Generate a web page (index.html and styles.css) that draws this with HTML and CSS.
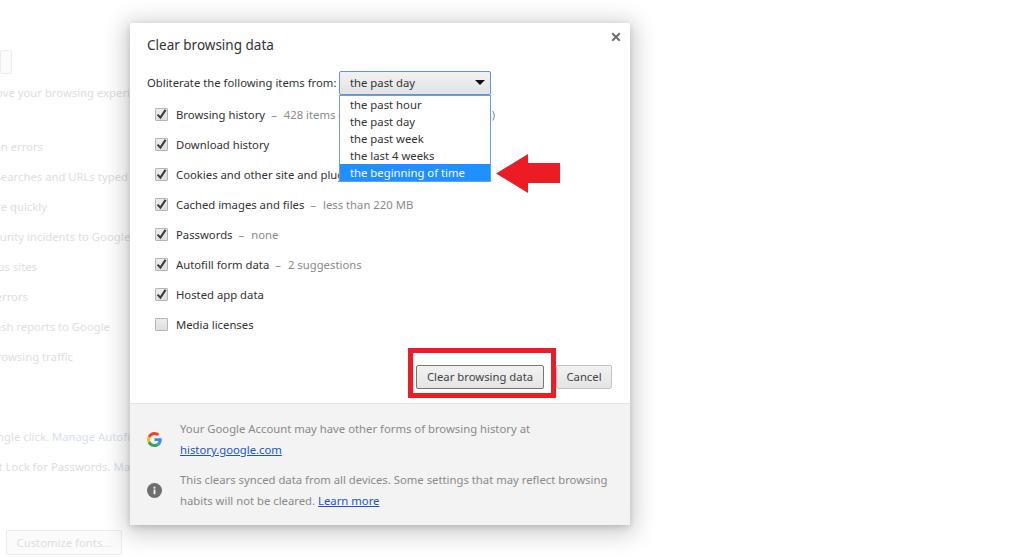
FILE: index.html
```html
<!DOCTYPE html>
<html lang="en">
<head>
<meta charset="utf-8">
<title>Clear browsing data</title>
<link rel="stylesheet" href="styles.css">
</head>
<body>
<main class="page">
  <div class="bg-btn-row"><span class="bg-btn"></span></div>
  <div class="bg-row bg-first end-130"><span class="bg-text">Google may use your browsing history to improve your browsing experi</span></div>
  <div class="bg-group">
    <div class="bg-row end-43"><span class="bg-text">Use a web service to help resolve navigation errors</span></div>
    <div class="bg-row end-128"><span class="bg-text">Use a prediction service to help complete searches and URLs typed</span></div>
    <div class="bg-row end-47"><span class="bg-text">Use a prediction service to load pages more quickly</span></div>
    <div class="bg-row end-130"><span class="bg-text">Automatically report details of possible security incidents to Google</span></div>
    <div class="bg-row end-37"><span class="bg-text">Protect you and your device from dangerous sites</span></div>
    <div class="bg-row end-28"><span class="bg-text">Use a web service to help resolve spelling errors</span></div>
    <div class="bg-row end-110"><span class="bg-text">Automatically send usage statistics and crash reports to Google</span></div>
    <div class="bg-row end-73"><span class="bg-text">Send a "Do Not Track" request with your browsing traffic</span></div>
  </div>
  <div class="bg-group bg-group-2">
    <div class="bg-row end-130"><span class="bg-text">Enable Autofill to fill out web forms in a single click. <span class="bg-link">Manage Autofi</span></span></div>
    <div class="bg-row end-130"><span class="bg-text">Offer to save your web passwords. Use Smart Lock for Passwords. <span class="bg-link">Ma</span></span></div>
  </div>
  <div class="bg-fonts"><span class="bg-btn bg-btn-fonts">Customize fonts...</span></div>
</main>

<section class="dialog" aria-label="Clear browsing data">
  <button class="close" aria-label="Close">
    <svg viewBox="0 0 10 10" width="10" height="10"><path d="M1.2 1.2 8.8 8.8M8.8 1.2 1.2 8.8" fill="none" stroke="#6f6f6f" stroke-width="2"/></svg>
  </button>
  <h1 class="title">Clear browsing data</h1>
  <div class="body">
    <div class="from">
      <span class="from-label">Obliterate the following items from:</span>
      <div class="select">the past day<span class="caret"></span></div>
    </div>
    <ul class="checks">
      <li class="check"><span class="box on"><svg viewBox="0 0 13 13" width="13" height="13"><path d="M2.6 6.6 5.4 9.6 10.6 1.8" fill="none" stroke="#3c3c3c" stroke-width="2.1"/></svg></span>Browsing history<span class="note"><span class="dash">–</span>428 items (and more on synced devices)</span></li>
      <li class="check"><span class="box on"><svg viewBox="0 0 13 13" width="13" height="13"><path d="M2.6 6.6 5.4 9.6 10.6 1.8" fill="none" stroke="#3c3c3c" stroke-width="2.1"/></svg></span>Download history</li>
      <li class="check"><span class="box on"><svg viewBox="0 0 13 13" width="13" height="13"><path d="M2.6 6.6 5.4 9.6 10.6 1.8" fill="none" stroke="#3c3c3c" stroke-width="2.1"/></svg></span>Cookies and other site and plugin data</li>
      <li class="check"><span class="box on"><svg viewBox="0 0 13 13" width="13" height="13"><path d="M2.6 6.6 5.4 9.6 10.6 1.8" fill="none" stroke="#3c3c3c" stroke-width="2.1"/></svg></span>Cached images and files<span class="note"><span class="dash">–</span>less than 220 MB</span></li>
      <li class="check"><span class="box on"><svg viewBox="0 0 13 13" width="13" height="13"><path d="M2.6 6.6 5.4 9.6 10.6 1.8" fill="none" stroke="#3c3c3c" stroke-width="2.1"/></svg></span>Passwords<span class="note"><span class="dash">–</span>none</span></li>
      <li class="check"><span class="box on"><svg viewBox="0 0 13 13" width="13" height="13"><path d="M2.6 6.6 5.4 9.6 10.6 1.8" fill="none" stroke="#3c3c3c" stroke-width="2.1"/></svg></span>Autofill form data<span class="note"><span class="dash">–</span>2 suggestions</span></li>
      <li class="check"><span class="box on"><svg viewBox="0 0 13 13" width="13" height="13"><path d="M2.6 6.6 5.4 9.6 10.6 1.8" fill="none" stroke="#3c3c3c" stroke-width="2.1"/></svg></span>Hosted app data</li>
      <li class="check"><span class="box"></span>Media licenses</li>
    </ul>
    <div class="actions">
      <button class="btn btn-primary">Clear browsing data</button>
      <button class="btn btn-cancel">Cancel</button>
    </div>
  </div>
  <footer class="foot">
    <div class="foot-row">
      <svg class="foot-icon" viewBox="0 0 48 48" width="15" height="15">
        <path fill="#EA4335" d="M24 9.5c3.500 0 6.700 1.300 9.100 3.500l6.800-6.800C35.800 2.400 30.300 0 24 0 14.600 0 6.500 5.400 2.600 13.200l7.900 6.100C12.400 13.700 17.700 9.500 24 9.500z"/>
        <path fill="#4285F4" d="M47 24.500c0-1.600-.1-3.100-.4-4.500H24v9h12.900c-.6 3-2.200 5.500-4.700 7.200l7.600 5.900C44.300 37.900 47 31.800 47 24.500z"/>
        <path fill="#FBBC05" d="M10.500 28.700C10 27.200 9.700 25.600 9.700 24s.3-3.200.8-4.700l-7.900-6.100C.9 16.400 0 20.100 0 24s.9 7.600 2.600 10.800l7.900-6.100z"/>
        <path fill="#34A853" d="M24 48c6.500 0 11.900-2.100 15.800-5.900l-7.600-5.900c-2.100 1.400-4.900 2.300-8.200 2.300-6.300 0-11.600-4.200-13.500-9.800l-7.900 6.100C6.500 42.600 14.600 48 24 48z"/>
      </svg>
      <p class="foot-text">Your Google Account may have other forms of browsing history at<br><a class="link" href="#">history.google.com</a></p>
    </div>
    <div class="foot-row">
      <svg class="foot-icon" viewBox="0 0 16 16" width="15" height="15">
        <circle cx="8" cy="8" r="8" fill="#6e6e6e"/>
        <rect x="7" y="7" width="2" height="5" fill="#f3f3f3"/>
        <rect x="7" y="4" width="2" height="2" fill="#f3f3f3"/>
      </svg>
      <p class="foot-text">This clears synced data from all devices. Some settings that may reflect browsing<br>habits will not be cleared. <a class="link" href="#">Learn more</a></p>
    </div>
  </footer>
</section>

<ul class="dropdown">
  <li class="opt">the past hour</li>
  <li class="opt">the past day</li>
  <li class="opt">the past week</li>
  <li class="opt">the last 4 weeks</li>
  <li class="opt opt-sel">the beginning of time</li>
</ul>

<svg class="arrow" viewBox="0 0 64 39" width="64" height="39"><path d="M0 19.500 32 0V9H64V29H32V39Z" fill="#ed1c24"/></svg>
<div class="mark"></div>
</body>
</html>
```
FILE: styles.css
```css
* { box-sizing: border-box; }
html, body { margin: 0; height: 100%; }
body {
  width: 1028px;
  height: 557px;
  overflow: hidden;
  background: #fff;
  font-family: "Noto Sans", "Open Sans", sans-serif;
  font-size: 11.3px;
  color: #333;
  position: relative;
}
ul { list-style: none; margin: 0; padding: 0; }
p, h1 { margin: 0; }

/* dimmed settings page behind the dialog */
.page { width: 130px; color: #dedede; padding-top: 50px; }
.bg-btn-row { display: flex; justify-content: flex-end; width: 12px; height: 24px; }
.bg-btn {
  display: block;
  width: 100%;
  border: 1px solid #ececec;
  border-radius: 2px;
  background: #fbfbfb;
}
.bg-row { display: flex; justify-content: flex-end; height: 30px; line-height: 30px; white-space: nowrap; }
.bg-first { margin-top: 4px; }
.bg-text { flex: none; }
.bg-group { margin-top: 24px; }
.bg-group-2 { margin-top: 50px; }
.bg-link { color: #d7e0f3; }
.end-130 { width: 130px; }
.end-43 { width: 43px; }
.end-128 { width: 128px; }
.end-47 { width: 47px; }
.end-37 { width: 37px; }
.end-28 { width: 28px; }
.end-110 { width: 110px; }
.end-73 { width: 73px; }
.bg-fonts { margin-top: 48px; padding-left: 6px; }
.bg-btn-fonts {
  width: 116px;
  height: 25px;
  line-height: 23px;
  text-align: center;
  color: #dedede;
}

/* dialog */
.dialog {
  position: absolute;
  left: 130px;
  top: 23px;
  width: 500px;
  height: 502px;
  background: #fff;
  border-radius: 2px;
  box-shadow: 0 4px 23px 5px rgba(0,0,0,.2), 0 2px 6px rgba(0,0,0,.15);
  display: flex;
  flex-direction: column;
}
.close {
  position: absolute;
  right: 9px;
  top: 9px;
  width: 10px;
  height: 10px;
  padding: 0;
  border: 0;
  background: none;
  display: flex;
}
.title { font-size: 13.5px; font-weight: 400; color: #333; padding: 12px 17px 0; line-height: 20px; }
.body { flex: 1; padding: 0 18px 0 17px; display: flex; flex-direction: column; }
.from { display: flex; align-items: center; margin-top: 16px; height: 24px; }
.from-label { color: #333; width: 192px; flex: none; padding-bottom: 2px; }
.select {
  width: 152px;
  height: 24px;
  border: 1px solid #5f93e8;
  border-radius: 2px;
  background: linear-gradient(#f2f2f2, #e2e2e2);
  padding-left: 10px;
  line-height: 22px;
  position: relative;
  color: #333;
}
.caret {
  position: absolute;
  right: 5px;
  top: 8px;
  border: 5px solid transparent;
  border-top: 5px solid #111;
  border-bottom: 0;
}
.checks { margin-top: 4px; padding-left: 8px; }
.check { display: flex; align-items: center; height: 30px; white-space: nowrap; }
.box {
  width: 13px;
  height: 13px;
  margin-right: 8px;
  border: 1px solid #b5b5b5;
  border-radius: 1px;
  background: linear-gradient(#ededed, #dedede);
  display: block;
  flex: none;
  position: relative;
}
.box svg { position: absolute; left: -1px; top: -1px; }
.note { color: #8a8a8a; }
.dash { margin: 0 7px 0 6px; }
.actions { display: flex; justify-content: flex-end; gap: 12px; margin-top: 26px; }
.btn {
  font: inherit;
  height: 24px;
  padding: 0 0 2px;
  border: 1px solid #c4c4c4;
  border-radius: 2px;
  background: linear-gradient(#f2f2f2, #e4e4e4);
  color: #444;
  white-space: nowrap;
}
.btn-primary { border-color: #777; width: 128px; }
.btn-cancel { width: 56px; }

.foot {
  height: 122px;
  background: #f3f3f3;
  border-top: 1px solid #e2e2e2;
  border-radius: 0 0 2px 2px;
  padding: 14px 17px 0;
  display: flex;
  flex-direction: column;
  gap: 9px;
}
.foot-row { display: flex; align-items: center; gap: 18px; }
.foot-icon { flex: none; }
.foot-text { color: #8a8a8a; line-height: 21px; white-space: nowrap; }
.link { color: #1a56cc; text-decoration: underline; }

/* overlays */
.dropdown {
  position: absolute;
  left: 339px;
  top: 95px;
  width: 152px;
  height: 87px;
  background: #fff;
  border: 1px solid #6a9ae8;
}
.opt { height: 17px; line-height: 17px; padding-left: 10px; color: #333; white-space: nowrap; }
.opt-sel { background: #1e90ff; color: #fff; }
.arrow { position: absolute; left: 496px; top: 154px; }
.mark {
  position: absolute;
  left: 408px;
  top: 348px;
  width: 148px;
  height: 50px;
  border: 5px solid #ed1c24;
}
```
